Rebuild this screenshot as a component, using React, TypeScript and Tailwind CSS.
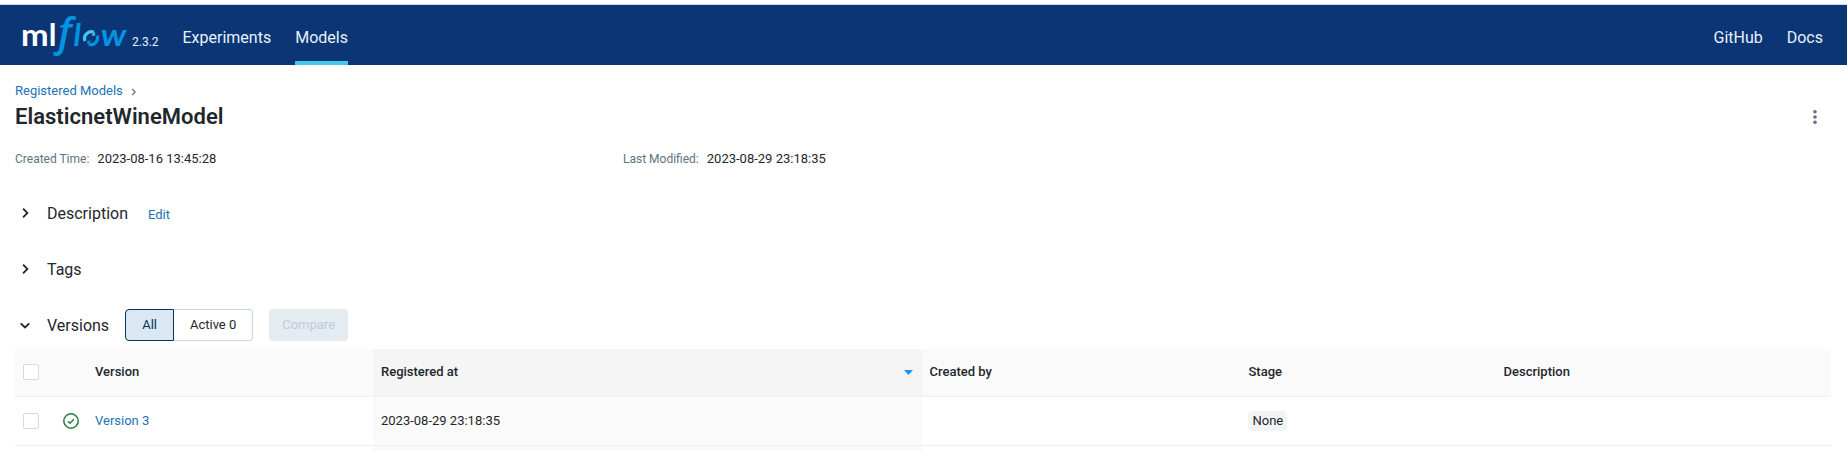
import React from "react";

function Logo() {
  return (
    <svg width="108" height="46" viewBox="20 12 108 46" aria-label="mlflow" className="block overflow-visible">
      <text x="21" y="46" fill="#fff" fontFamily="Lato" fontWeight="700" fontSize="31" textLength="27.6" lengthAdjust="spacingAndGlyphs">m</text>
      <text x="48.8" y="46" fill="#fff" fontFamily="Lato" fontWeight="700" fontSize="31">l</text>
      <g fill="#0194e2">
        <text x="58" y="46" fontFamily="Open Sans" fontWeight="600" fontStyle="italic" fontSize="40">f</text>
        <text x="73.4" y="46" fontFamily="Lato" fontWeight="700" fontStyle="italic" fontSize="31">l</text>
        <text x="100.8" y="46" fontFamily="Lato" fontWeight="700" fontStyle="italic" fontSize="31" textLength="25.6" lengthAdjust="spacingAndGlyphs">w</text>
      </g>
      <g fill="none" strokeWidth="3.2">
        <path d="M85.1 41A6.6 6.6 0 0 1 93.7 32.3" stroke="#43c9ed" />
        <path d="M97.2 35.6A6.6 6.6 0 0 1 88.8 44.1" stroke="#0194e2" />
      </g>
      <path d="M91.6 35.8l3.6-.3-.6-4.2z" fill="#43c9ed" />
      <path d="M90.8 40.6l-3.8.4.8 4z" fill="#0194e2" />
    </svg>
  );
}

function Chevron({ down = false }: { down?: boolean }) {
  return (
    <svg width="16" height="16" viewBox="0 0 16 16" fill="none" stroke="#1f272d" strokeWidth="1.8" className="shrink-0">
      <path d={down ? "M3.7 6.3L8 10.5l4.3-4.2" : "M6.1 3.7L10.4 8l-4.3 4.3"} />
    </svg>
  );
}

function Checkbox() {
  return <span className="block size-4 rounded-[2px] border border-[#d9d9d9] bg-white" />;
}

const columns = "grid grid-cols-[40px_32px_286px_549px_318.5px_255px_1fr]";

export default function App() {
  return (
    <div className="h-[451px] overflow-hidden bg-white font-['Roboto',sans-serif] text-[13px] leading-5 text-[#1f272d]">
      <div className="h-[5px] border-b border-[#d8d8d8]" />
      <header className="flex h-[60px] bg-[#0b3574] pr-6 pl-5 text-base text-[#e7f1fb]">
        <div className="flex w-[162.5px] pt-[7px]">
          <Logo />
          <span className="mt-5 ml-1 text-xs leading-5">2.3.2</span>
        </div>
        <nav className="flex gap-6 leading-[66px]">
          <a>Experiments</a>
          <a className="h-[60px] border-b-4 border-[#43c9ed]">Models</a>
        </nav>
        <nav className="ml-auto flex gap-6 leading-[66px]">
          <a>GitHub</a>
          <a>Docs</a>
        </nav>
      </header>

      <main className="pr-4 pl-[15px]">
        <div className="flex items-center pt-4 text-[#2272b4]">
          <span>Registered Models</span>
          <svg width="8" height="8" viewBox="0 0 8 8" fill="none" stroke="#5f7281" strokeWidth="1.2" className="mt-px ml-[7px]">
            <path d="M2.2 1L5.2 4 2.2 7" />
          </svg>
        </div>
        <div className="flex h-8 items-center justify-between">
          <h1 className="text-[22px] leading-8 font-semibold tracking-[0.02px]">ElasticnetWineModel</h1>
          <svg width="16" height="16" viewBox="0 0 16 16" fill="#5f7281" className="mr-2">
            <circle cx="8" cy="2.8" r="1.8" />
            <circle cx="8" cy="8" r="1.8" />
            <circle cx="8" cy="13.2" r="1.8" />
          </svg>
        </div>

        <div className="mt-4 flex h-[19px] items-center">
          <div className="flex w-[608px] gap-2">
            <span className="text-xs leading-5 text-[#5f7281]">Created Time:</span>
            <span>2023-08-16 13:45:28</span>
          </div>
          <div className="flex gap-2">
            <span className="text-xs leading-5 text-[#5f7281]">Last Modified:</span>
            <span>2023-08-29 23:18:35</span>
          </div>
        </div>

        <div className="mt-[29px] flex h-8 items-center pl-0.5">
          <Chevron />
          <h2 className="mt-0.5 ml-[14px] text-base">Description</h2>
          <a className="mt-1 ml-5 text-[#2272b4]">Edit</a>
        </div>
        <div className="mt-6 flex h-8 items-center pl-0.5">
          <Chevron />
          <h2 className="mt-0.5 ml-[14px] text-base">Tags</h2>
        </div>
        <div className="mt-6 flex h-8 items-center pl-0.5">
          <Chevron down />
          <h2 className="mt-0.5 ml-[14px] text-base">Versions</h2>
          <div className="ml-4 flex h-8">
            <button className="w-[49px] rounded-l border border-[#04355d] bg-[#dbe7f3] text-[#04355d]">All</button>
            <button className="w-[79px] rounded-r border border-l-0 border-[#c7d7e6]">Active 0</button>
          </div>
          <button className="ml-4 h-8 w-[79px] rounded bg-[#e4ebf1] text-[#c0cdd8]">Compare</button>
        </div>

        <div className="mt-2">
          <div className={`${columns} h-12 rounded-t-[2px] border-b border-[#f0f0f0] bg-[#fafafa] font-medium leading-[46px]`}>
            <span className="flex items-start pt-[15px] pl-2"><Checkbox /></span>
            <span />
            <span className="pl-2">Version</span>
            <span className="flex justify-between bg-[#f5f5f5] pr-[9px] pl-2">
              Registered at
              <svg width="9" height="5" viewBox="0 0 9 5" fill="#1890ff" className="mt-[21px]"><path d="M0 0h9L4.5 5z" /></svg>
            </span>
            <span className="pl-[7.5px]">Created by</span>
            <span className="pl-2">Stage</span>
            <span className="pl-2">Description</span>
          </div>
          <div className={`${columns} h-[49px] border-b border-[#f0f0f0] leading-[48px]`}>
            <span className="flex items-center pl-2"><Checkbox /></span>
            <span className="flex items-center pl-2">
              <svg width="16" height="16" viewBox="0 0 16 16" fill="none" stroke="#277c43" strokeWidth="1.5">
                <circle cx="8" cy="8" r="7.2" />
                <path d="M5 8.2l2 2 3.9-3.9" />
              </svg>
            </span>
            <a className="pl-2 text-[#2272b4]">Version 3</a>
            <span className="bg-[#fafafa] pl-2">2023-08-29 23:18:35</span>
            <span />
            <span className="flex items-center pl-[7.5px]">
              <span className="h-5 rounded bg-[#f1f3f5] pr-1 pl-[4.5px] leading-5">None</span>
            </span>
            <span />
          </div>
          <div className={`${columns} h-[49px]`}>
            <span className="col-start-4 bg-[#fafafa]" />
          </div>
        </div>
      </main>
    </div>
  );
}
